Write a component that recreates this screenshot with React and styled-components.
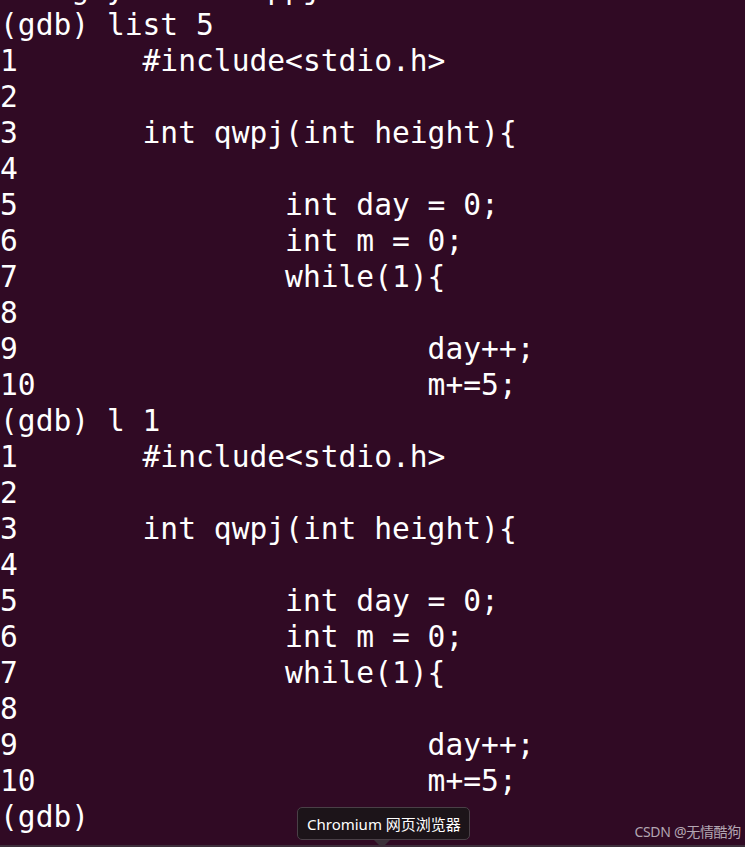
import React from "react";
import styled, { createGlobalStyle } from "styled-components";

const GlobalStyle = createGlobalStyle`
  html, body {
    margin: 0;
    padding: 0;
    background: #300a24;
    overflow: hidden;
  }
`;

const Screen = styled.div`
  position: relative;
  width: 745px;
  height: 847px;
  display: flex;
  flex-direction: column;
  background: #300a24;
  overflow: hidden;
`;

const Terminal = styled.div`
  flex: 1;
  min-height: 0;
  margin-top: -29px;
  font-family: "DejaVu Sans Mono", "Liberation Mono", monospace;
  font-size: 29.6px;
  line-height: 36px;
  color: #ffffff;
`;

const Line = styled.div`
  height: 36px;
  white-space: pre;
  tab-size: 8;
  -moz-tab-size: 8;
`;

const BottomEdge = styled.div`
  height: 2px;
  flex-shrink: 0;
  background: #3d2e3b;
`;

const Tooltip = styled.div`
  position: absolute;
  left: 297px;
  top: 807px;
  height: 31px;
  padding: 0 8px 0 9px;
  display: flex;
  align-items: center;
  background: #1c1419;
  border: 1px solid #4a4047;
  border-radius: 5px;
  color: #ffffff;
  font-family: "Noto Sans", "Noto Sans CJK SC", sans-serif;
  font-size: 15px;
  white-space: nowrap;

  &::after {
    content: "";
    position: absolute;
    left: 76px;
    bottom: -9px;
    border-left: 8px solid transparent;
    border-right: 8px solid transparent;
    border-top: 8px solid #3a3038;
  }
`;

const Watermark = styled.div`
  position: absolute;
  right: 4px;
  bottom: 6px;
  color: #b3a6b2;
  font-family: "Noto Sans", "Noto Sans CJK SC", sans-serif;
  font-size: 14px;
  letter-spacing: -0.3px;
`;

const listing = [
  "1\t#include<stdio.h>",
  "2",
  "3\tint qwpj(int height){",
  "4",
  "5\t\tint day = 0;",
  "6\t\tint m = 0;",
  "7\t\twhile(1){",
  "8",
  "9\t\t\tday++;",
  "10\t\t\tm+=5;",
];

const lines = [
  "    g y        ppj",
  "(gdb) list 5",
  ...listing,
  "(gdb) l 1",
  ...listing,
  "(gdb)",
];

export default function App() {
  return (
    <Screen>
      <GlobalStyle />
      <Terminal>
        {lines.map((text, i) => (
          <Line key={i}>{text}</Line>
        ))}
      </Terminal>
      <BottomEdge />
      <Tooltip>Chromium 网页浏览器</Tooltip>
      <Watermark>CSDN @无情酷狗</Watermark>
    </Screen>
  );
}
